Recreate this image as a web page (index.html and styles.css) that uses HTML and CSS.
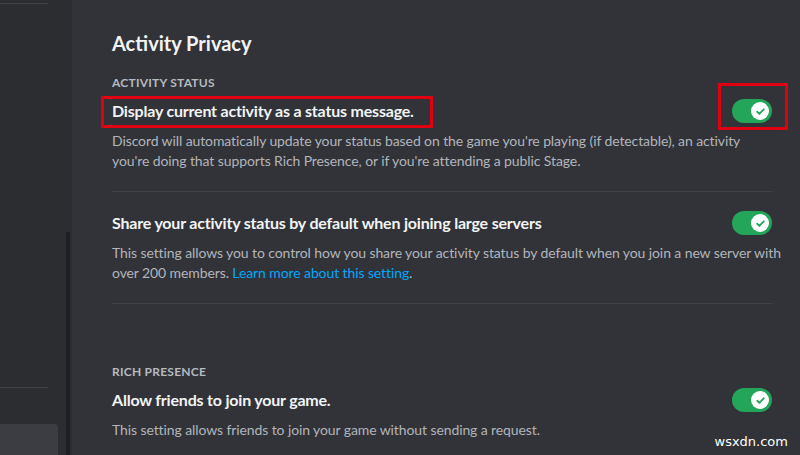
FILE: index.html
```html
<!DOCTYPE html>
<html lang="en">
<head>
<meta charset="utf-8">
<title>Activity Privacy</title>
<link rel="stylesheet" href="styles.css">
</head>
<body>
<div class="app">
  <aside class="sidebar">
    <div class="side-content">
      <div class="side-rule top"></div>
      <div class="side-spacer"></div>
      <div class="side-rule"></div>
      <div class="side-item"></div>
    </div>
    <div class="scrollbar"></div>
  </aside>
  <main class="content">
    <h2 class="page-title">Activity Privacy</h2>

    <section class="section">
      <h3 class="section-label">Activity Status</h3>
      <div class="setting">
        <div class="setting-row">
          <div class="setting-title highlighted">Display current activity as a status message.</div>
          <div class="switch highlighted-switch"><span class="knob"><svg viewBox="0 0 20 20" width="13" height="13"><path d="M5 10.4 8.3 13.6 15 6.6" fill="none" stroke="#23a55a" stroke-width="2.8" stroke-linecap="round" stroke-linejoin="round"/></svg></span></div>
        </div>
        <p class="setting-desc">Discord will automatically update your status based on the game you're playing (if detectable), an activity<br>you're doing that supports Rich Presence, or if you're attending a public Stage.</p>
      </div>
      <div class="divider"></div>
      <div class="setting second">
        <div class="setting-row">
          <div class="setting-title">Share your activity status by default when joining large servers</div>
          <div class="switch"><span class="knob"><svg viewBox="0 0 20 20" width="13" height="13"><path d="M5 10.4 8.3 13.6 15 6.6" fill="none" stroke="#23a55a" stroke-width="2.8" stroke-linecap="round" stroke-linejoin="round"/></svg></span></div>
        </div>
        <p class="setting-desc">This setting allows you to control how you share your activity status by default when you join a new server with over 200 members. <a class="link" href="#">Learn more about this setting</a>.</p>
      </div>
      <div class="divider"></div>
    </section>

    <section class="section rich">
      <h3 class="section-label">Rich Presence</h3>
      <div class="setting">
        <div class="setting-row">
          <div class="setting-title">Allow friends to join your game.</div>
          <div class="switch"><span class="knob"><svg viewBox="0 0 20 20" width="13" height="13"><path d="M5 10.4 8.3 13.6 15 6.6" fill="none" stroke="#23a55a" stroke-width="2.8" stroke-linecap="round" stroke-linejoin="round"/></svg></span></div>
        </div>
        <p class="setting-desc">This setting allows friends to join your game without sending a request.</p>
      </div>
    </section>
  </main>
</div>
<div class="watermark">wsxdn.com</div>
</body>
</html>
```

FILE: styles.css
```css
*, *::before, *::after { box-sizing: border-box; }

html, body {
  margin: 0;
  padding: 0;
  height: 100%;
  overflow: hidden;
}

body {
  background: #313338;
  font-family: Lato, "Noto Sans", sans-serif;
  color: #f2f3f5;
  position: relative;
}

.app {
  display: flex;
  height: 455px;
}

.sidebar {
  width: 72px;
  flex: 0 0 72px;
  background: #2b2d31;
  display: flex;
}

.side-content {
  width: 66px;
  display: flex;
  flex-direction: column;
}

.side-rule {
  width: 48px;
  height: 1px;
  background: #3f4147;
}

.side-rule.top {
  margin-top: 3px;
}

.side-spacer {
  height: 383px;
}

.side-item {
  margin-top: 36px;
  width: 58px;
  flex: 1;
  background: #3b3d43;
  border-radius: 0 4px 0 0;
}

.scrollbar {
  width: 4px;
  margin-top: 232px;
  background: #1e1f22;
}

.content {
  flex: 1;
  padding: 31px 28px 0 40px;
}

.page-title {
  margin: 0 0 20px;
  font-size: 20px;
  line-height: 24px;
  font-weight: 700;
  color: #f2f3f5;
}

.section-label {
  margin: 0 0 8px;
  font-size: 12px;
  line-height: 16px;
  font-weight: 700;
  text-transform: uppercase;
  color: #b5bac1;
  letter-spacing: 0.02em;
}

.setting-row {
  display: flex;
  align-items: center;
  justify-content: space-between;
  height: 24px;
}

.setting-title {
  font-size: 16px;
  line-height: 20px;
  font-weight: 700;
  letter-spacing: -0.2px;
  color: #f2f3f5;
  position: relative;
}

.highlighted::after {
  content: "";
  position: absolute;
  left: -11px;
  top: -5px;
  width: 332px;
  height: 32px;
  border: 3px solid #e00012;
}

.switch {
  width: 40px;
  height: 24px;
  border-radius: 12px;
  background: #23a55a;
  display: flex;
  align-items: center;
  justify-content: flex-end;
  padding-right: 3px;
  position: relative;
  flex: 0 0 40px;
}

.highlighted-switch::after {
  content: "";
  position: absolute;
  left: -14px;
  top: -16px;
  width: 70px;
  height: 47px;
  border: 3px solid #e00012;
}

.knob {
  width: 18px;
  height: 18px;
  border-radius: 50%;
  background: #ffffff;
  display: flex;
  align-items: center;
  justify-content: center;
}

.setting-desc {
  margin: 8px -12px 0 0;
  font-size: 14px;
  line-height: 20px;
  letter-spacing: -0.1px;
  color: #b1b5bc;
}

.link {
  color: #00a8fc;
  text-decoration: none;
}

.divider {
  height: 1px;
  background: #3f4147;
  margin-top: 20px;
}

.setting.second {
  margin-top: 19px;
}

.section.rich {
  margin-top: 60px;
}

.watermark {
  position: absolute;
  right: 12px;
  bottom: 6px;
  font-family: "DejaVu Sans", sans-serif;
  font-size: 13px;
  color: #ffffff;
}
```
